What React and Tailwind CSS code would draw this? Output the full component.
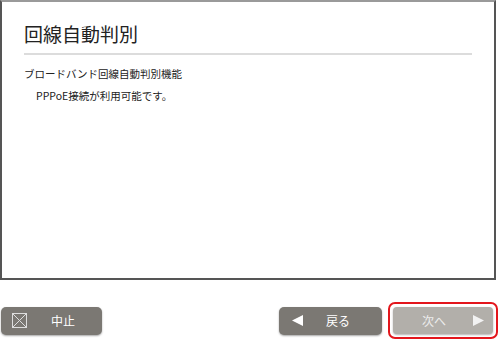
import React from "react";

const App = () => {
  return (
    <div className="w-[500px] h-[346px] bg-white font-['Noto_Sans_CJK_JP',sans-serif] text-[#222]">
      <div className="w-[496px] h-[280px] border-2 border-[#555] border-t-[#9a9a9a] bg-white px-[22px] pt-[18px]">
        <h1 className="text-[19px] leading-[28px] text-[#222]">回線自動判別</h1>
        <div className="mt-[5px] h-[2px] w-[448px] bg-[#dcdcdc]" />
        <p className="mt-[11px] text-[10.5px] leading-[16px]">ブロードバンド回線自動判別機能</p>
        <p className="mt-[6px] pl-[12px] text-[10.5px] leading-[16px]">PPPoE接続が利用可能です。</p>
      </div>

      <div className="flex items-center mt-[22px] pl-[1px] pr-[2px]">
        <button className="flex items-center w-[101px] h-[28px] rounded-[5px] bg-[#7b7873] shadow-[0_1px_2px_rgba(0,0,0,0.35)] text-white text-[12px] pl-[11px]">
          <span className="flex w-[15px] h-[15px] border border-[#ddd]">
            <svg width="13" height="13" viewBox="0 0 13 13" className="block">
              <path d="M0 0 L13 13 M13 0 L0 13" stroke="#ddd" strokeWidth="1" />
            </svg>
          </span>
          <span className="ml-[24px]">中止</span>
        </button>

        <div className="flex-1" />

        <button className="flex items-center w-[103px] h-[28px] rounded-[5px] bg-[#7b7873] shadow-[0_1px_2px_rgba(0,0,0,0.35)] text-white text-[12px] pl-[13px]">
          <svg width="11" height="11" viewBox="0 0 11 11">
            <path d="M0 5.5 L11 0 L11 11 Z" fill="#fff" />
          </svg>
          <span className="ml-[23px]">戻る</span>
        </button>

        <div className="ml-[6px] p-[3px] border-2 border-[#e3161c] rounded-[7px]">
          <button className="flex items-center w-[100px] h-[27px] rounded-[4px] bg-[#b2afaa] shadow-[0_1px_2px_rgba(0,0,0,0.3)] text-[#ececec] text-[12px] pl-[29px]">
            <span>次へ</span>
            <svg width="11" height="11" viewBox="0 0 11 11" className="ml-[27px]">
              <path d="M11 5.5 L0 0 L0 11 Z" fill="#f2f2f2" />
            </svg>
          </button>
        </div>
      </div>
    </div>
  );
};

export default App;
